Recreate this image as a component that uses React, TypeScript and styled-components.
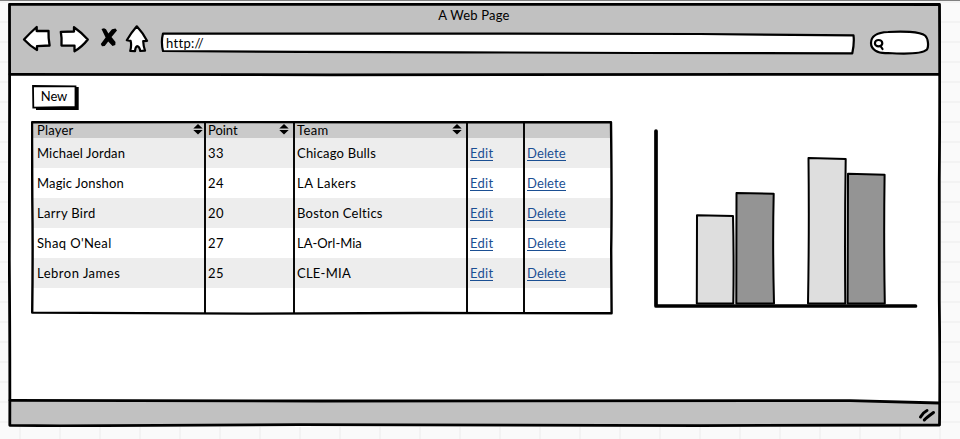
import React from 'react';
import styled, { createGlobalStyle } from 'styled-components';

const GlobalStyle = createGlobalStyle`
  *, *::before, *::after { box-sizing: border-box; }
  html, body { margin: 0; height: 100%; overflow: hidden; }
  body {
    background-color: #fafafa;
    font-family: Lato, "Liberation Sans", sans-serif;
    font-size: 13px;
    line-height: 16px;
    color: #000;
  }
  svg { display: block; }
`;

const Canvas = styled.main`
  height: 439px;
  padding: 2px 0 0 8px;
  border-top: 1px solid #808080;
  background-image:
    linear-gradient(#f3f3f3 2px, transparent 2px),
    linear-gradient(90deg, #f3f3f3 2px, transparent 2px);
  background-size: 20px 20px, 40px 40px;
  background-position: 0 0, 19px 0;
`;

const BrowserWindow = styled.div`
  position: relative;
  display: flex;
  flex-direction: column;
  width: 933px;
  height: 424px;
  padding: 1px;
  background: #fff;
`;

const Header = styled.header`
  height: 71px;
  flex: none;
  background: #c1c1c1;
`;

const Title = styled.div`
  height: 21px;
  padding: 3px 1px 0 0;
  text-align: center;
  letter-spacing: 0.2px;
`;

const Toolbar = styled.nav`
  display: flex;
  align-items: flex-start;
  padding-left: 13px;
`;

const IconButton = styled.span<{ $gap: number }>`
  display: block;
  margin-right: ${(p) => p.$gap}px;
`;

const AddressBar = styled.div`
  position: relative;
  display: flex;
  align-items: center;
  width: 696px;
  height: 24px;
  margin: 7px 12px 0 0;
  padding: 0 0 3px 6px;
`;

const SearchBox = styled.div`
  width: 62px;
  height: 26px;
  margin-top: 5px;
`;

const Sketch = styled.svg`
  position: absolute;
  inset: 0;
  z-index: 0;
  pointer-events: none;
`;

const Content = styled.section`
  display: flex;
  flex: 1;
  padding: 10px 0 0 22px;
`;

const Left = styled.div`
  width: 582px;
`;

const NewButton = styled.button`
  position: relative;
  display: block;
  width: 48px;
  height: 26px;
  margin: 0 0 10px 1px;
  padding: 0 4px 4px 0;
  border: 0;
  background: none;
  font: inherit;
  color: inherit;
`;

const Label = styled.span<{ $track?: number }>`
  position: relative;
  z-index: 1;
  letter-spacing: ${(p) => p.$track ?? 0}px;
  white-space: nowrap;
`;

const Table = styled.div`
  width: 582px;
  height: 194px;
  position: relative;
  display: grid;
  grid-template-columns: 173px 89px 173px 57px 86px;
  grid-template-rows: 15px repeat(5, 30px) 25px;
  padding: 2px 2px;
`;

const Cell = styled.div<{ $bg: string; $head?: boolean }>`
  display: flex;
  align-items: center;
  justify-content: space-between;
  padding: 0 1px ${(p) => (p.$head ? 2 : 0)}px 2px;
  background: ${(p) => p.$bg};
  &:nth-child(5n + 1) { padding-left: 4px; }
  &:not(:nth-child(5n)) { border-right: 2px solid #080808; }
`;

const SortSlot = styled.span<{ $right: number }>`
  margin-right: ${(p) => p.$right}px;
`;

const Link = styled.a<{ $track: number }>`
  height: 15px;
  line-height: 14px;
  margin-top: 1px;
  color: #1b4f93;
  border-bottom: 1px solid #1b4f93;
  letter-spacing: ${(p) => p.$track}px;
`;

const ChartPanel = styled.div`
  padding: 43px 0 0 41px;
`;

const Footer = styled.footer`
  position: relative;
  height: 25px;
  flex: none;
  display: flex;
  justify-content: flex-end;
  padding: 7px 4px 0 0;
  background: #c1c1c1;
  clip-path: polygon(0 0, 90% 0, 100% 3px, 100% 100%, 0 100%);
`;

const ink = { stroke: '#000', strokeLinejoin: 'round' as const, strokeLinecap: 'round' as const };

const BackIcon = () => (
  <svg width="29" height="28" viewBox="22 25 29 28" fill="#fff" strokeWidth="2.3" {...ink}>
    <path d="M24 39.5Q30 33 36.7 27V31L48.5 30.8Q48.3 38 49.6 45.5L37 46.2V50Q30 46 24 39.5Z" />
  </svg>
);
const ForwardIcon = () => (
  <svg width="31" height="28" viewBox="59 25 31 28" fill="#fff" strokeWidth="2.3" {...ink}>
    <path d="M60.8 31.8L74 31.5V27.2Q81 32 87.8 39.5Q82 47 74.5 51.2V45.7L61.5 45.5Q62 38 60.8 31.8Z" />
  </svg>
);
const StopIcon = () => (
  <svg width="18" height="28" viewBox="100 25 18 28" fill="#000">
    <path d="M101.5 29L104 28.2L106 29.2L108.4 33.5L112 29.2L115.5 28.5L117 30.5L111.5 37L115.5 42L115.3 45L112.5 46L108.2 41.5L104.7 46L102 46.3L100.8 44L105.6 37.5Z" />
  </svg>
);
const HomeIcon = () => (
  <svg width="24" height="28" viewBox="125 25 24 28" fill="#fff" strokeWidth="2.2" {...ink}>
    <path d="M126.8 40.2Q131 33 136.8 26.3Q143 33 147 40.8L143.2 41.2Q143.4 46 145 50.6L140.3 51Q139.3 46.5 137 46.2Q135.3 47 135 51.2L130.2 51Q131.8 45 130.6 40.9Z" />
  </svg>
);
const SearchField = () => (
  <svg width="62" height="26" viewBox="868 30 62 26" fill="#fff" strokeWidth="2.2" {...ink}>
    <path d="M871 43C871 36 877 32.5 888 32C902 31 920 31.5 925 35.5C928 38 929 46 927 49.5C922 54 903 54 888 53C877 54 871 49 871 43Z" />
    <ellipse cx="878.6" cy="43.2" rx="3.7" ry="3.2" />
    <path d="M880.5 46L882.5 49" />
  </svg>
);
const SortIcon = () => (
  <svg width="10" height="11" viewBox="0 0 10 11" fill="#000">
    <path d="M5 0L9.7 4.5H.3ZM5 10.5L.3 6H9.7Z" />
  </svg>
);
const Grip = () => (
  <svg width="18" height="15" viewBox="919 408 18 15" fill="none" strokeWidth="3" {...ink}>
    <path d="M921.5 417Q924 412.5 928 410.5M925.3 420Q927 418 934.5 412.5" />
  </svg>
);

const BarChart = () => (
  <svg width="264" height="180" viewBox="654 128 264 180" {...ink} strokeWidth="2">
    <path d="M697 215.3L733 216Q734 260 733.3 303.5H696.8Z" fill="#dedede" />
    <path d="M736.5 193L773.7 193.7Q772.5 245 774 303.5H736.3Z" fill="#949494" />
    <path d="M808.5 158L845.7 159Q844.6 230 845.3 303.5H808Q809.3 230 808.5 158Z" fill="#dedede" />
    <path d="M848 173.8L884.6 174.7Q883.7 240 884.8 303.5H847.6Z" fill="#949494" />
    <path d="M656 131V306H915.5" fill="none" strokeWidth="3.7" />
  </svg>
);

type Text = [string, number];
const headings: { text: Text; right: number }[] = [
  { text: ['Player', 0.2], right: 0 },
  { text: ['Point', -0.05], right: 3 },
  { text: ['Team', 0.35], right: 3 },
];
const players: [Text, Text, Text][] = [
  [['Michael Jordan', 0.15], ['33', 0.5], ['Chicago Bulls', 0.2]],
  [['Magic Jonshon', 0.16], ['24', 0.5], ['LA Lakers', 0.5]],
  [['Larry Bird', 0.32], ['20', 0.5], ['Boston Celtics', 0.27]],
  [["Shaq O'Neal", 0.38], ['27', 0.5], ['LA-Orl-Mia', 0]],
  [['Lebron James', 0.5], ['25', 0.5], ['CLE-MIA', 0.25]],
];
const emptyCells = [0, 1, 2, 3, 4];

export default function App() {
  return (
    <>
      <GlobalStyle />
      <Canvas>
        <BrowserWindow>
          <Header>
            <Title>A Web Page</Title>
            <Toolbar>
              <IconButton $gap={8}><BackIcon /></IconButton>
              <IconButton $gap={10}><ForwardIcon /></IconButton>
              <IconButton $gap={7}><StopIcon /></IconButton>
              <IconButton $gap={11}><HomeIcon /></IconButton>
              <AddressBar>
                <Sketch width="696" height="24" viewBox="160 32 696 24" fill="#fff" strokeWidth="2.2" {...ink}>
                  <path d="M163 33.5L480 33.6L700 34L853.5 35.3Q854.5 43 852.3 53.3L640 53L460 52.3L300 51.8L163 51Q160.8 42 163 33.5Z" />
                </Sketch>
                <Label $track={0.3}>http://</Label>
              </AddressBar>
              <SearchBox><SearchField /></SearchBox>
            </Toolbar>
          </Header>
          <Content>
            <Left>
              <NewButton>
                <Sketch width="48" height="26" viewBox="32 85 48 26">
                  <path d="M36 87H78.7V110H36Z" fill="#000" />
                  <path d="M33 86L75.5 86.3V107L33.3 107.7Z" fill="#fff" stroke="#000" strokeWidth="1.8" />
                </Sketch>
                <Label $track={-0.1}>New</Label>
              </NewButton>
              <Table>
                {headings.map(({ text, right }) => (
                  <Cell key={text[0]} $bg="#cacaca" $head>
                    <Label $track={text[1]}>{text[0]}</Label>
                    <SortSlot $right={right}><SortIcon /></SortSlot>
                  </Cell>
                ))}
                <Cell $bg="#cacaca" />
                <Cell $bg="#cacaca" />
                {players.map((row, i) => {
                  const bg = i % 2 === 0 ? '#ededed' : '#ffffff';
                  return (
                    <React.Fragment key={row[0][0]}>
                      {row.map(([text, track]) => (
                        <Cell key={text} $bg={bg}><Label $track={track}>{text}</Label></Cell>
                      ))}
                      <Cell $bg={bg}><Link $track={0.25}>Edit</Link></Cell>
                      <Cell $bg={bg}><Link $track={0.12}>Delete</Link></Cell>
                    </React.Fragment>
                  );
                })}
                {emptyCells.map((i) => <Cell key={i} $bg="#fff" />)}
                <Sketch width="582" height="194" viewBox="31 121 582 194" fill="none" strokeWidth="2.4" {...ink}>
                  <path d="M32 122.2L220 122L400 122.3L611 122.2Q612 200 611.2 250L611.6 313.3L420 313L250 313.6L32.2 312.6Q33 250 32.3 200Z" />
                </Sketch>
              </Table>
            </Left>
            <ChartPanel><BarChart /></ChartPanel>
          </Content>
          <Footer><Grip /></Footer>
          <Sketch width="933" height="424" viewBox="8 3 933 424" fill="none" strokeWidth="2.8" {...ink}>
            <path d="M9.5 4.3L480 4.4L939.5 4.5Q940 100 939.3 180V300Q940.2 380 939.5 425L700 425.6L300 424.7L60 425.8L9.8 425.3Q10 350 9.3 260Q9.1 180 9.6 90Z" />
            <path d="M10 74.3L330 74.8L940 74.3M10 400.3L320 401L850 400.6L939 403" />
          </Sketch>
        </BrowserWindow>
      </Canvas>
    </>
  );
}
